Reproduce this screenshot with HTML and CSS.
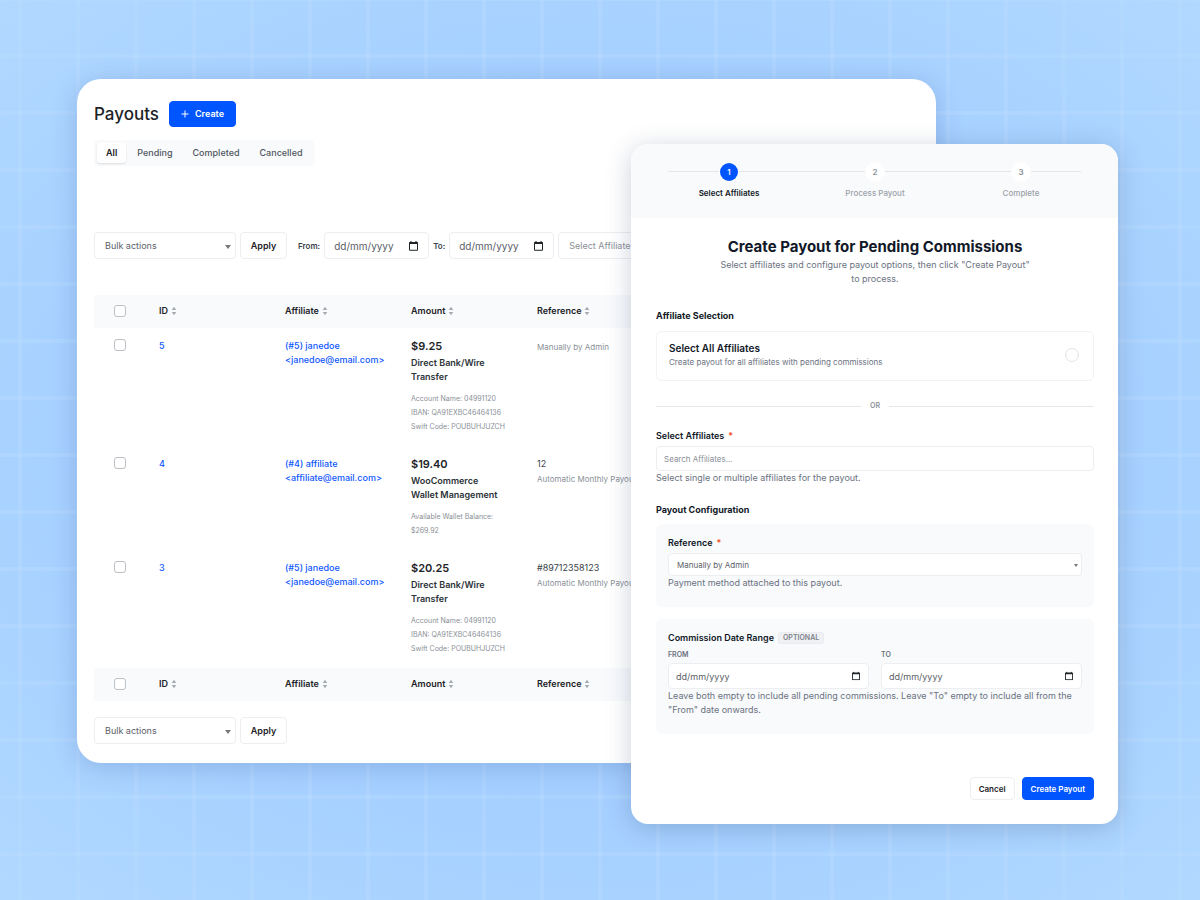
FILE: index.html
```html
<!DOCTYPE html>
<html lang="en">
  <head>
    <meta charset="UTF-8" />
    <meta name="viewport" content="width=device-width, initial-scale=1.0" />
    <title>Payouts</title>
    <link rel="stylesheet" href="styles.css">
  </head>
  <body>
    <!-- Shared icons -->
    <svg class="sprite" aria-hidden="true">
      <symbol id="calendar" viewBox="0 0 10 11">
        <path fill="currentColor" fill-rule="evenodd" d="M1.6 0h1.2v1h4.4V0h1.2v1H9a1 1 0 0 1 1 1v7.800a1 1 0 0 1-1 1H1a1 1 0 0 1-1-1V2a1 1 0 0 1 1-1h.6zM1.100 3.200v6.500h7.800V3.200z" />
      </symbol>
      <symbol id="sort" viewBox="0 0 6 10">
        <path fill="currentColor" d="M3 .8 5.300 4H.7zM3 9.200.7 6h4.600z" />
      </symbol>
    </svg>

    <main class="panel">
      <header class="panel-header">
        <h1>Payouts</h1>
        <button class="btn btn-primary btn-create" type="button">
          <svg class="plus" viewBox="0 0 8 8" aria-hidden="true"><path d="M4 0.500v7M0.500 4h7" /></svg>
          Create
        </button>
      </header>

      <nav class="tabs">
        <a class="active" href="#all">All</a>
        <a href="#pending">Pending</a>
        <a href="#completed">Completed</a>
        <a href="#cancelled">Cancelled</a>
      </nav>

      <!-- Filters -->
      <form class="filters">
        <span class="select bulk">
          <select aria-label="Bulk actions">
            <option>Bulk actions</option>
          </select>
        </span>
        <button class="btn btn-apply" type="button">Apply</button>
        <label class="filter-label from" for="filterFrom">From:</label>
        <span class="date">
          <input type="text" id="filterFrom" placeholder="dd/mm/yyyy" />
          <svg class="calendar"><use href="#calendar" /></svg>
        </span>
        <label class="filter-label" for="filterTo">To:</label>
        <span class="date">
          <input type="text" id="filterTo" placeholder="dd/mm/yyyy" />
          <svg class="calendar"><use href="#calendar" /></svg>
        </span>
        <input class="affiliate-filter" type="text" placeholder="Select Affiliate" aria-label="Select Affiliate" />
      </form>

      <table class="payouts">
        <thead>
          <tr>
            <th class="check"><input type="checkbox" aria-label="Select all" /></th>
            <th class="col">ID<svg class="sort"><use href="#sort" /></svg></th>
            <th class="col">Affiliate<svg class="sort"><use href="#sort" /></svg></th>
            <th class="col">Amount<svg class="sort"><use href="#sort" /></svg></th>
            <th>Reference<svg class="sort"><use href="#sort" /></svg></th>
          </tr>
        </thead>
        <tbody>
          <tr>
            <td class="check"><input type="checkbox" aria-label="Select payout 5" /></td>
            <td><a href="#5">5</a></td>
            <td><a href="#janedoe">(#5) janedoe<br />&lt;janedoe@email.com&gt;</a></td>
            <td>
              <p class="amount">$9.25</p>
              <p class="method">Direct Bank/Wire<br />Transfer</p>
              <p class="details">Account Name: 04991120<br />IBAN: QA91EXBC46464136<br />Swift Code: POUBUHJUZCH</p>
            </td>
            <td><p class="note">Manually by Admin</p></td>
          </tr>
          <tr>
            <td class="check"><input type="checkbox" aria-label="Select payout 4" /></td>
            <td><a href="#4">4</a></td>
            <td><a href="#affiliate">(#4) affiliate<br />&lt;affiliate@email.com&gt;</a></td>
            <td>
              <p class="amount">$19.40</p>
              <p class="method">WooCommerce<br />Wallet Management</p>
              <p class="details">Available Wallet Balance:<br />$269.92</p>
            </td>
            <td>
              <p>12</p>
              <p class="note">Automatic Monthly Payout</p>
            </td>
          </tr>
          <tr>
            <td class="check"><input type="checkbox" aria-label="Select payout 3" /></td>
            <td><a href="#3">3</a></td>
            <td><a href="#janedoe">(#5) janedoe<br />&lt;janedoe@email.com&gt;</a></td>
            <td>
              <p class="amount">$20.25</p>
              <p class="method">Direct Bank/Wire<br />Transfer</p>
              <p class="details">Account Name: 04991120<br />IBAN: QA91EXBC46464136<br />Swift Code: POUBUHJUZCH</p>
            </td>
            <td>
              <p>#89712358123</p>
              <p class="note">Automatic Monthly Payout</p>
            </td>
          </tr>
        </tbody>
        <tfoot>
          <tr>
            <th class="check"><input type="checkbox" aria-label="Select all" /></th>
            <th>ID<svg class="sort"><use href="#sort" /></svg></th>
            <th>Affiliate<svg class="sort"><use href="#sort" /></svg></th>
            <th>Amount<svg class="sort"><use href="#sort" /></svg></th>
            <th>Reference<svg class="sort"><use href="#sort" /></svg></th>
          </tr>
        </tfoot>
      </table>

      <div class="bulk-footer">
        <span class="select bulk">
          <select aria-label="Bulk actions">
            <option>Bulk actions</option>
          </select>
        </span>
        <button class="btn btn-apply" type="button">Apply</button>
      </div>
    </main>

    <!-- Create payout dialog -->
    <section class="dialog" role="dialog" aria-labelledby="dialogTitle">
      <ol class="steps">
        <li class="current"><span class="number">1</span>Select Affiliates</li>
        <li><span class="number">2</span>Process Payout</li>
        <li><span class="number">3</span>Complete</li>
      </ol>

      <form class="dialog-body">
        <h2 id="dialogTitle">Create Payout for Pending Commissions</h2>
        <p class="intro">Select affiliates and configure payout options, then click "Create Payout" to process.</p>

        <h3>Affiliate Selection</h3>
        <label class="choice" for="selectAll">
          <span class="choice-text">
            <strong>Select All Affiliates</strong>
            <small>Create payout for all affiliates with pending commissions</small>
          </span>
          <input type="radio" id="selectAll" name="selection" />
        </label>

        <div class="divider">OR</div>

        <label class="field-label" for="searchAffiliates">Select Affiliates <span class="required">*</span></label>
        <input class="search" type="text" id="searchAffiliates" placeholder="Search Affiliates..." />
        <p class="help">Select single or multiple affiliates for the payout.</p>

        <h3 class="config-title">Payout Configuration</h3>
        <div class="box">
          <label class="field-label" for="reference">Reference <span class="required">*</span></label>
          <span class="select reference">
            <select id="reference">
              <option>Manually by Admin</option>
            </select>
          </span>
          <p class="help">Payment method attached to this payout.</p>
        </div>

        <div class="box">
          <p class="field-label">Commission Date Range <span class="badge">OPTIONAL</span></p>
          <div class="dates">
            <div class="date-field">
              <label for="rangeFrom">FROM</label>
              <span class="date">
                <input type="text" id="rangeFrom" placeholder="dd/mm/yyyy" />
                <svg class="calendar"><use href="#calendar" /></svg>
              </span>
            </div>
            <div class="date-field">
              <label for="rangeTo">TO</label>
              <span class="date">
                <input type="text" id="rangeTo" placeholder="dd/mm/yyyy" />
                <svg class="calendar"><use href="#calendar" /></svg>
              </span>
            </div>
          </div>
          <p class="help">Leave both empty to include all pending commissions. Leave "To" empty to include all from the "From" date onwards.</p>
        </div>

        <div class="actions">
          <button class="btn" type="button">Cancel</button>
          <button class="btn btn-primary" type="submit">Create Payout</button>
        </div>
      </form>
    </section>
  </body>
</html>
```

FILE: styles.css
```css
* {
  box-sizing: border-box;
  margin: 0;
  padding: 0;
}

body {
  position: relative;
  min-height: 100vh;
  padding: 79px 264px 79px 77px;
  font-family: Inter, "Liberation Sans", sans-serif;
  font-size: 9px;
  line-height: 14px;
  color: #3c434a;
  background-color: #a6d1ff;
  background-image:
    linear-gradient(90deg, rgba(190, 222, 255, 0.3) 4px, transparent 4px),
    linear-gradient(rgba(190, 222, 255, 0.3) 4px, transparent 4px),
    radial-gradient(ellipse at center, #a4cfff 55%, #b1d8ff 100%);
  background-size: 58px 57px, 58px 57px, 100% 100%;
  background-position: 18px 0, 0 54px, 0 0;
}

input,
select,
button {
  font: inherit;
  color: inherit;
}

.sprite {
  position: absolute;
  width: 0;
  height: 0;
}

/* Panel */
.panel {
  padding: 22px 18px 19px 17px;
  background-color: white;
  border-radius: 24px;
  box-shadow: 0 4px 24px rgba(60, 90, 160, 0.25);
}

.panel-header {
  display: flex;
  align-items: center;
  gap: 10px;
  margin-bottom: 13px;
}

h1 {
  font-size: 17px;
  font-weight: 500;
  line-height: 26px;
  color: #1d2327;
}

.btn {
  padding: 0 8px;
  background-color: white;
  border: 1px solid #eceef1;
  border-radius: 4px;
  font-size: 8px;
  font-weight: 600;
  color: #1d2327;
  cursor: pointer;
}

.btn-primary {
  background-color: #0055ff;
  border-color: #0055ff;
  color: white;
}

.btn-create {
  display: flex;
  align-items: center;
  gap: 6px;
  height: 26px;
  padding: 0 11px;
  font-size: 9px;
}

.plus {
  width: 8px;
  height: 8px;
  stroke: white;
  stroke-width: 1;
}

.tabs {
  display: flex;
  gap: 2px;
  width: fit-content;
  padding: 3px;
  margin-bottom: 66px;
  background-color: #f8fafc;
  border-radius: 4px;
}

.tabs a {
  padding: 3px 9px;
  border-radius: 3px;
  font-weight: 500;
  color: #50575e;
  text-decoration: none;
}

.tabs .active {
  background-color: white;
  box-shadow: 0 1px 2px rgba(0, 0, 0, 0.12);
  font-weight: 600;
  color: #1d2327;
}

/* Filters */
.filters,
.bulk-footer {
  display: flex;
  align-items: center;
  gap: 4px;
}

.filters {
  margin-bottom: 36px;
}

.bulk-footer {
  margin-top: 16px;
}

.select,
.date {
  position: relative;
  display: block;
}

.select select,
.date input,
.affiliate-filter,
.search {
  display: block;
  width: 100%;
  height: 27px;
  padding: 0 10px;
  background-color: white;
  border: 1px solid #eceef1;
  border-radius: 4px;
  appearance: none;
  color: #5b6168;
}

.select::after {
  content: "";
  position: absolute;
  top: 50%;
  right: 5px;
  border: 3px solid transparent;
  border-top: 4px solid #777;
  border-bottom: 0;
  transform: translateY(-1px);
}

input::placeholder {
  color: #5b6168;
  opacity: 1;
}

.bulk {
  width: 142px;
}

.btn-apply {
  width: 47px;
  height: 27px;
  font-size: 9px;
}

.filter-label {
  font-size: 8px;
  font-weight: 600;
}

.from {
  margin-left: 7px;
}

.filters .date {
  width: 105px;
}

.filters .date input {
  padding: 0 9px;
  font-size: 10px;
}

.calendar {
  position: absolute;
  top: 50%;
  right: 11px;
  width: 9px;
  height: 10px;
  transform: translateY(-50%);
  color: #1d2327;
}

.affiliate-filter {
  flex: 1;
  min-width: 0;
}

.affiliate-filter::placeholder,
.search::placeholder {
  color: #8a9097;
}

/* Table */
.payouts {
  width: 100%;
  table-layout: fixed;
  border-collapse: collapse;
  text-align: left;
}

.payouts th {
  height: 33px;
  padding: 0 12px 2px 14px;
  background-color: #f8fafc;
  font-weight: 600;
  color: #1d2327;
}

.payouts td {
  padding: 11px 12px 12px 14px;
  vertical-align: top;
}

.payouts .check {
  width: 51px;
  padding-left: 20px;
  padding-right: 0;
}

.payouts .col {
  width: 126px;
}

.payouts a {
  font-weight: 500;
  color: #0f57ff;
  text-decoration: none;
}

.payouts input {
  display: block;
  width: 12px;
  height: 12px;
  border: 1px solid #bcc0c5;
  border-radius: 3px;
  background-color: white;
  appearance: none;
}

.sort {
  display: inline-block;
  width: 6px;
  height: 10px;
  margin-left: 3px;
  vertical-align: -2px;
  color: #a7abb1;
}

.amount {
  margin-bottom: 3px;
  font-size: 11px;
  font-weight: 600;
  color: #1d2327;
}

.method {
  margin-bottom: 8px;
  font-weight: 600;
  color: #2c3338;
}

.details {
  font-size: 7px;
  color: #8a9097;
}

.note {
  margin-top: 1px;
  font-size: 8px;
  color: #8a9097;
  white-space: nowrap;
}

/* Dialog */
.dialog {
  position: absolute;
  top: 144px;
  right: 82px;
  width: 487px;
  overflow: hidden;
  background-color: white;
  border-radius: 17px;
  box-shadow: 0 4px 24px rgba(50, 70, 110, 0.25);
}

.steps {
  position: relative;
  display: flex;
  height: 74px;
  padding: 19px 24px 0 25px;
  background-color: #f8fafc;
  list-style: none;
}

.steps::before {
  content: "";
  position: absolute;
  top: 27px;
  left: 37px;
  right: 37px;
  height: 1px;
  background-color: #e4e6ea;
}

.steps li {
  position: relative;
  flex: 1;
  display: flex;
  flex-direction: column;
  align-items: center;
  gap: 5px;
  font-size: 8px;
  font-weight: 500;
  color: #9ca1a9;
}

.number {
  width: 18px;
  height: 18px;
  border-radius: 50%;
  background-color: white;
  box-shadow: 0 0 0 1px white;
  line-height: 18px;
  text-align: center;
  font-weight: 600;
  color: #8a9097;
}

.steps .current {
  font-weight: 600;
  color: #111827;
}

.current .number {
  background-color: #0055ff;
  color: white;
}

.dialog-body {
  padding: 19px 24px 24px 25px;
}

h2 {
  font-size: 15px;
  font-weight: 700;
  line-height: 20px;
  text-align: center;
  color: #111827;
}

.intro {
  max-width: 310px;
  margin: 1px auto 23px;
  text-align: center;
  color: #6b7280;
}

h3 {
  margin-bottom: 8px;
  font-size: 9px;
  font-weight: 700;
  color: #111827;
}

.choice {
  display: flex;
  align-items: center;
  justify-content: space-between;
  height: 50px;
  padding: 0 14px 2px 12px;
  border: 1px solid #f2f3f6;
  border-radius: 6px;
}

.choice-text {
  display: flex;
  flex-direction: column;
}

.choice strong {
  font-size: 10px;
  font-weight: 600;
  color: #111827;
}

.choice small {
  font-size: 8px;
  color: #6b7280;
}

.choice input {
  width: 14px;
  height: 14px;
  border: 1px solid #e2e4e8;
  border-radius: 50%;
  appearance: none;
}

.divider {
  display: flex;
  align-items: center;
  gap: 9px;
  margin: 18px 0 16px;
  font-size: 7px;
  font-weight: 600;
  color: #8a9097;
}

.divider::before,
.divider::after {
  content: "";
  flex: 1;
  height: 1px;
  background-color: #e4e6ea;
}

.field-label {
  display: flex;
  align-items: center;
  gap: 4px;
  margin-bottom: 3px;
  font-weight: 600;
  color: #111827;
}

.required {
  color: #f04a1d;
}

.search {
  height: 25px;
  padding: 0 7px;
  font-size: 8px;
}

.help {
  color: #6b7280;
}

.config-title {
  margin-top: 18px;
  margin-bottom: 7px;
}

.box {
  padding: 12px 12px 17px;
  margin-bottom: 12px;
  background-color: #f8fafc;
  border-radius: 6px;
}

.reference select {
  height: 23px;
  padding: 0 8px;
  font-size: 8px;
}

.reference::after {
  right: 4px;
  border-width: 3px 2px 0;
}

.badge {
  padding: 0 4px;
  background-color: #f0f1f4;
  border: 1px solid #e9ebee;
  border-radius: 3px;
  font-size: 7px;
  font-weight: 600;
  line-height: 10px;
  color: #7c828a;
}

.dates {
  display: flex;
  gap: 12px;
}

.date-field {
  flex: 1;
}

.date-field label {
  display: block;
  margin-bottom: 1px;
  font-size: 7px;
  font-weight: 600;
  color: #6b7280;
}

.date-field input {
  height: 26px;
  padding: 0 7px;
}

.date-field .calendar {
  width: 8px;
  height: 9px;
  right: 9px;
}

.actions {
  display: flex;
  justify-content: flex-end;
  gap: 7px;
  margin-top: 43px;
}

.actions .btn {
  height: 23px;
}
```
